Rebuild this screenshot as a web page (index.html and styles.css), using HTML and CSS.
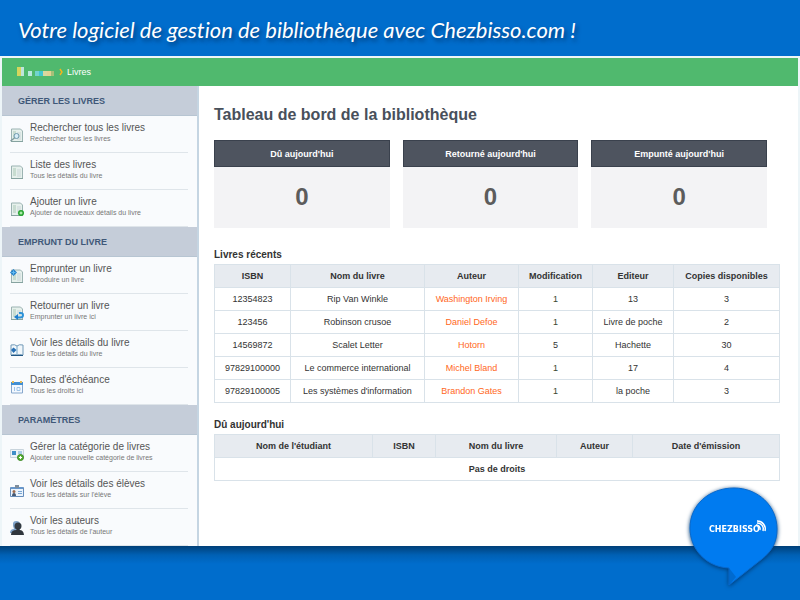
FILE: index.html
```html
<!DOCTYPE html>
<html lang="fr">
<head>
<meta charset="utf-8">
<title>Tableau de bord de la bibliothèque</title>
<link rel="stylesheet" href="styles.css">
</head>
<body>
<svg class="defs" aria-hidden="true">
  <symbol id="page" viewBox="0 0 14 14">
    <path d="M1.500 1h9l2 2v10.500h-11z" fill="#e6f0ec" stroke="#9bb3b2"/>
    <path d="M3 4h3M3 6h3M3 8h3M3 10h3" stroke="#a9c8b5"/>
    <path d="M7 5h4M7 7h4M7 9h4M7 11h4" stroke="#c9d6d8"/>
    <path d="M1 13.500h12" stroke="#86a3a0"/>
  </symbol>
</svg>
<header class="banner"><h1>Votre logiciel de gestion de bibliothèque avec Chezbisso.com !</h1></header>
<div class="app">
  <nav class="crumbs" aria-label="Fil d'Ariane">
    <svg class="pixels" viewBox="0 0 38 10" aria-hidden="true">
      <path d="M0 0h4v9H0z" fill="#d5d65c"/><path d="M4 0h3v9H4z" fill="#bfe5dc"/>
      <path d="M11 4h4v5h-4z" fill="#b9e9df"/><path d="M18 4h4v5h-4z" fill="#72d3ce"/>
      <path d="M22 4h4v5h-4z" fill="#42c8cf"/><path d="M26 4h4v5h-4z" fill="#d8d8a0"/>
      <path d="M30 4h4v5h-4z" fill="#e2d292"/><path d="M34 4h3v5h-3z" fill="#a4c078"/>
    </svg>
    <svg class="chevron" viewBox="0 0 4 8" aria-hidden="true"><path d="M1 1L3 4L1 7" fill="none" stroke="#f5b51c" stroke-width="1.400"/></svg>
    <a href="#livres">Livres</a>
  </nav>
  <div class="columns">
    <aside class="sidebar">
      <h2>GÉRER LES LIVRES</h2>
      <ul>
        <li><a href="#"><svg viewBox="0 0 14 14"><use href="#page"/><circle cx="6.500" cy="8" r="2.500" fill="#d7ecf7" stroke="#6d98ab"/><path d="M4.500 10l-4 3" stroke="#829b9f" stroke-width="1.500"/></svg><span>Rechercher tous les livres<small>Rechercher tous les livres</small></span></a></li>
        <li><a href="#"><svg viewBox="0 0 14 14"><use href="#page"/></svg><span>Liste des livres<small>Tous les détails du livre</small></span></a></li>
        <li><a href="#"><svg viewBox="0 0 14 14"><use href="#page"/><circle cx="11" cy="11" r="3" fill="#27a52f"/><path d="M11 9.500v3M9.500 11h3" stroke="#d7ffd2"/></svg><span>Ajouter un livre<small>Ajouter de nouveaux détails du livre</small></span></a></li>
      </ul>
      <h2>EMPRUNT DU LIVRE</h2>
      <ul>
        <li><a href="#"><svg viewBox="0 0 14 14"><use href="#page"/><path d="M3.500 0L7 3.500 3.500 7 0 3.500z" fill="#2581cb"/><path d="M1.500 3.500h4M3.500 1.500v4" stroke="#65bdf0"/></svg><span>Emprunter un livre<small>Introduire un livre</small></span></a></li>
        <li><a href="#"><svg viewBox="0 0 14 14"><use href="#page"/><path d="M7 11.500h3q3 0 3-2.500t-4-2" fill="none" stroke="#2b91d8" stroke-width="2"/><path d="M8 8v6l-4-3z" fill="#1e7dcc"/></svg><span>Retourner un livre<small>Emprunter un livre ici</small></span></a></li>
        <li><a href="#"><svg viewBox="0 0 14 14"><path d="M1 2q4-1 6 1 2-2 6-1v10q-4-1-6 0-2-1-6 0z" fill="#f1f7fb" stroke="#7199b8"/><path d="M7 3v9" stroke="#74a5c7"/><path d="M1 12.500h12" stroke="#225785"/><path d="M3.500 4.500L6.500 7l-3 3L1 7z" fill="#2870b5"/></svg><span>Voir les détails du livre<small>Tous les détails du livre</small></span></a></li>
        <li><a href="#"><svg viewBox="0 0 14 14"><path d="M1.500 2.500h11v10.500h-11z" fill="#f4f9ff" stroke="#87a7cc"/><path d="M1 2h12v3H1z" fill="#428fd3"/><path d="M3 1v2M11 1v2" stroke="#e6bb55" stroke-width="2"/><path d="M4.500 7v4M7 7.500h3v3H7z" fill="none" stroke="#9fc4e8"/></svg><span>Dates d'échéance<small>Tous les droits ici</small></span></a></li>
      </ul>
      <h2>PARAMÈTRES</h2>
      <ul>
        <li><a href="#"><svg viewBox="0 0 14 14"><path d="M.5 2.500h13v8H.5z" fill="#eef4f8" stroke="#c8d4dc"/><path d="M2 4h4v4H2z" fill="#3f8ec8"/><path d="M8 4h4v3H8z" fill="#a9cce4"/><circle cx="10.500" cy="10.500" r="3" fill="#5bb437" stroke="#3a8623"/><path d="M10.500 9v3M9 10.500h3" stroke="#fff"/></svg><span>Gérer la catégorie de livres<small>Ajouter une nouvelle catégorie de livres</small></span></a></li>
        <li><a href="#"><svg viewBox="0 0 14 14"><path d="M.5 3.500h13v9H.5z" fill="#eaf3fc" stroke="#668dbb"/><path d="M1 3h12v2H1z" fill="#6797cc"/><path d="M5 1h4v3H5z" fill="#7e8d9d"/><circle cx="4" cy="7.500" r="1.500" fill="#9b6b50"/><path d="M2 12q0-3 2-3t2 3z" fill="#455873"/><path d="M8 7.500h4M8 9.500h4" stroke="#79a5d2"/></svg><span>Voir les détails des élèves<small>Tous les détails sur l'élève</small></span></a></li>
        <li><a href="#"><svg viewBox="0 0 14 14"><path d="M0 12q0-4 4-4Q1 0 6 0t4 5v7z" fill="#7fa3c9"/><circle cx="8" cy="5" r="3.500" fill="#333b43"/><path d="M6.500 7h3v2q4 0 4.500 5H1q0-5 5.500-5z" fill="#30363d"/></svg><span>Voir les auteurs<small>Tous les détails de l'auteur</small></span></a></li>
      </ul>
    </aside>
    <main id="livres">
      <h2 class="title">Tableau de bord de la bibliothèque</h2>
      <div class="stats">
        <section><h3>Dû aujourd'hui</h3><p>0</p></section>
        <section><h3>Retourné aujourd'hui</h3><p>0</p></section>
        <section><h3>Empunté aujourd'hui</h3><p>0</p></section>
      </div>
      <table class="recent">
        <caption>Livres récents</caption>
        <thead><tr><th class="isbn">ISBN</th><th class="book">Nom du livre</th><th class="author">Auteur</th><th class="edition">Modification</th><th class="publisher">Editeur</th><th>Copies disponibles</th></tr></thead>
        <tbody>
          <tr><td>12354823</td><td>Rip Van Winkle</td><td><a href="#">Washington Irving</a></td><td class="num">1</td><td>13</td><td>3</td></tr>
          <tr><td>123456</td><td>Robinson crusoe</td><td><a href="#">Daniel Defoe</a></td><td class="num">1</td><td>Livre de poche</td><td>2</td></tr>
          <tr><td>14569872</td><td>Scalet Letter</td><td><a href="#">Hotorn</a></td><td>5</td><td>Hachette</td><td>30</td></tr>
          <tr><td>97829100000</td><td>Le commerce international</td><td><a href="#">Michel Bland</a></td><td class="num">1</td><td>17</td><td>4</td></tr>
          <tr><td>97829100005</td><td>Les systèmes d'information</td><td><a href="#">Brandon Gates</a></td><td class="num">1</td><td>la poche</td><td>3</td></tr>
        </tbody>
      </table>
      <table class="due">
        <caption>Dû aujourd'hui</caption>
        <thead><tr><th class="student">Nom de l'étudiant</th><th class="isbn">ISBN</th><th class="book">Nom du livre</th><th class="author">Auteur</th><th>Date d'émission</th></tr></thead>
        <tbody><tr><td colspan="5"><b>Pas de droits</b></td></tr></tbody>
      </table>
    </main>
  </div>
</div>
<footer>
  <div class="brand">
    <svg viewBox="0 0 100 110" role="img" aria-label="Chezbisso">
      <defs><linearGradient id="bubble" x1="0" y1="0" x2="1" y2="1"><stop offset="0" stop-color="#0a70da"/><stop offset=".15" stop-color="#007bf0"/><stop offset=".85" stop-color="#007bf0"/><stop offset="1" stop-color="#0068d0"/></linearGradient></defs>
      <path d="M50 8C74 8 93 26 93 49C93 62 88 71 78 79L45 105V88C22 87 6 69 6 48C6 25 25 8 50 8Z" fill="url(#bubble)" stroke="#086bd0"/>
      <path d="M45 88v17l7-8z" fill="#0059ad" opacity=".5"/>
      <text x="25" y="52">CHEZBISSO</text>
      <g fill="none" stroke="#fff" stroke-width="1.500"><path d="M72 45a4 4 0 0 1 4 5M73 43a6 6 0 0 1 6 8M73 41a8 8 0 0 1 8 10"/></g>
    </svg>
  </div>
</footer>
</body>
</html>
```
FILE: styles.css
```css
* { box-sizing: border-box; }
body {
  margin: 0;
  min-height: 100vh;
  display: flex;
  flex-direction: column;
  background: #006dcc;
  font-family: "Liberation Sans", Arial, sans-serif;
  font-size: 9px;
  color: #333;
}
h1, h2, h3, p, ul { margin: 0; padding: 0; }
a { color: inherit; text-decoration: none; }
.defs { position: absolute; width: 0; height: 0; }
.banner { padding: 12px 18px 8px; }
.banner h1 {
  font: italic 400 22px/36px Gabriola, Lato, sans-serif;
  font-variant-ligatures: none;
  color: #fff;
  text-shadow: 2px 3px 4px #003c78;
  white-space: nowrap;
}
.app { background: #fff; border: 2px solid #edf5f8; border-bottom: 0; }
.crumbs {
  display: flex;
  align-items: center;
  height: 28px;
  padding: 0 15px;
  background: #50b96e;
  color: #fff;
}
.pixels { width: 38px; height: 10px; }
.chevron { width: 4px; height: 8px; margin: 0 4px; }
.columns { display: flex; }
.sidebar {
  flex: 0 0 197px;
  background: #f9fbfd;
  border-right: 2px solid #c5d5e2;
}
.sidebar h2 {
  height: 30px;
  padding-left: 16px;
  background: #c5cdd9;
  border-bottom: 1px solid #b7c5d2;
  color: #3f5878;
  font-size: 9px;
  line-height: 30px;
}
.sidebar ul { list-style: none; padding: 0 9px 0 8px; }
.sidebar li { height: 37px; border-bottom: 1px solid #dfe5ea; }
.sidebar li a { display: flex; gap: 6px; padding-top: 6px; font-size: 10px; line-height: 12px; color: #555; }
.sidebar svg { width: 14px; height: 14px; margin-top: 6px; }
.sidebar small { display: block; font-size: 7px; line-height: 9px; color: #777; }
main { flex: 1; min-width: 0; padding: 18px 18px 0 15px; }
.title { font-size: 16px; line-height: 22px; color: #48505b; }
.stats { display: grid; grid-template-columns: repeat(3, 1fr); gap: 13px; margin: 14px 13px 18px 0; }
.stats section { background: #f3f3f5; text-align: center; }
.stats h3 {
  height: 27px;
  background: #4e545f;
  border: 1px solid #3a414d;
  color: #fff;
  font-size: 9px;
  line-height: 26px;
}
.stats p { height: 61px; font-size: 24px; font-weight: 700; line-height: 60px; color: #5c5c5c; }
table { width: 100%; table-layout: fixed; border-collapse: collapse; margin-bottom: 13px; text-align: center; }
caption { text-align: left; font-size: 10px; font-weight: 700; line-height: 18px; }
th, td { height: 23px; padding: 0; border: 1px solid #d9e2e9; }
th { background: #e7ebf0; }
td a { color: #ff681c; }
.num { color: #3a4630; }
.recent .isbn { width: 76px; }
.recent .book { width: 134px; }
.recent .author { width: 94px; }
.recent .edition { width: 74px; }
.recent .publisher { width: 81px; }
.due .student { width: 158px; }
.due .isbn { width: 63px; }
.due .book { width: 121px; }
.due .author { width: 76px; }
footer {
  position: relative;
  flex: 1;
  min-height: 54px;
  background: linear-gradient(#004078, #0060b4 9px, #006dcc 18px);
}
.brand { position: absolute; right: 16px; bottom: 10px; width: 100px; height: 110px; }
.brand svg { width: 100px; height: 110px; filter: drop-shadow(0 1px 2px #00386f); }
.brand text { font: 700 8px "DejaVu Sans", sans-serif; fill: #fff; }
```
